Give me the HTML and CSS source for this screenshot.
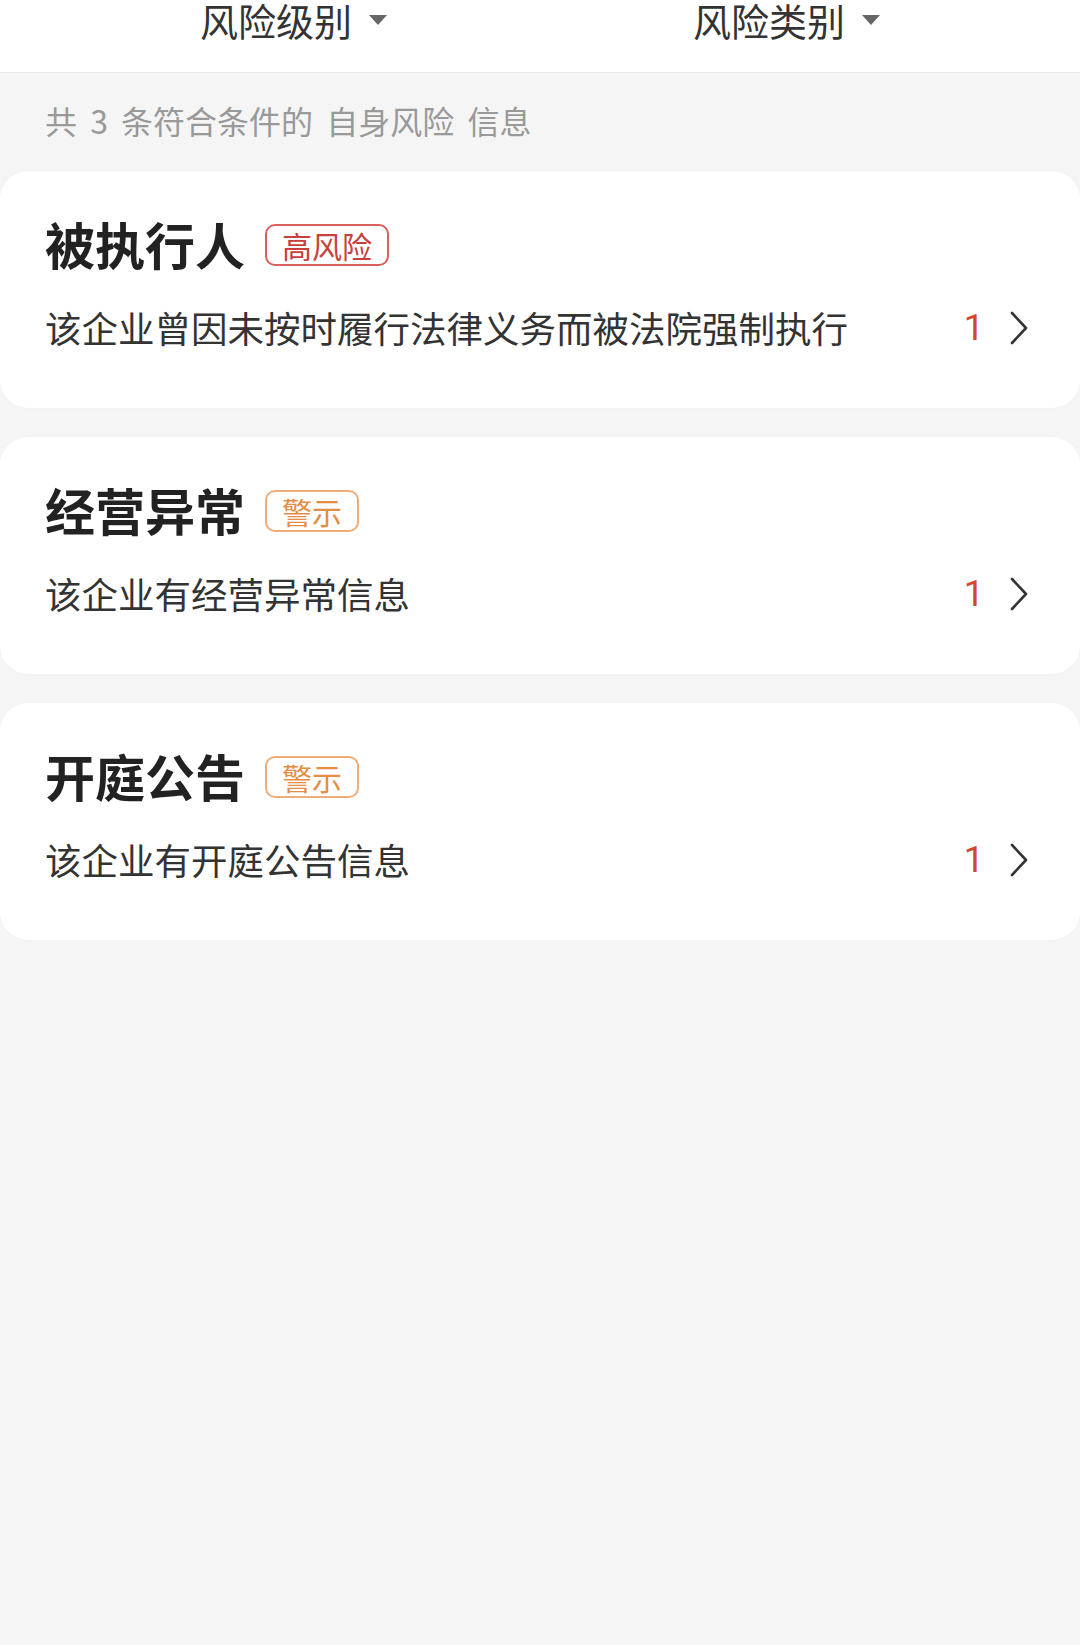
FILE: index.html
```html
<!DOCTYPE html>
<html lang="zh-CN">
<head>
  <meta charset="UTF-8">
  <meta name="viewport" content="width=device-width, initial-scale=1.0">
  <title>自身风险</title>
  <link rel="stylesheet" href="styles.css">
</head>
<body>
  <!-- 筛选栏 -->
  <div class="filter-bar">
    <div class="filter filter-level">
      <span>风险级别</span>
      <i class="caret"></i>
    </div>
    <div class="filter filter-type">
      <span>风险类别</span>
      <i class="caret"></i>
    </div>
  </div>

  <p class="summary">共 3 条符合条件的 自身风险 信息</p>

  <ul class="risk-list">
    <li class="risk-card">
      <div class="risk-head">
        <h3 class="risk-title">被执行人</h3>
        <span class="tag tag-high">高风险</span>
      </div>
      <div class="risk-row">
        <span class="risk-desc">该企业曾因未按时履行法律义务而被法院强制执行</span>
        <span class="risk-count">1</span>
        <svg class="chevron" width="18" height="34" viewBox="0 0 18 34"><path d="M2 2 L16 17 L2 32" fill="none" stroke="#333" stroke-width="2.6" stroke-linecap="round" stroke-linejoin="round"/></svg>
      </div>
    </li>
    <li class="risk-card">
      <div class="risk-head">
        <h3 class="risk-title">经营异常</h3>
        <span class="tag tag-warn">警示</span>
      </div>
      <div class="risk-row">
        <span class="risk-desc">该企业有经营异常信息</span>
        <span class="risk-count">1</span>
        <svg class="chevron" width="18" height="34" viewBox="0 0 18 34"><path d="M2 2 L16 17 L2 32" fill="none" stroke="#333" stroke-width="2.6" stroke-linecap="round" stroke-linejoin="round"/></svg>
      </div>
    </li>
    <li class="risk-card">
      <div class="risk-head">
        <h3 class="risk-title">开庭公告</h3>
        <span class="tag tag-warn">警示</span>
      </div>
      <div class="risk-row">
        <span class="risk-desc">该企业有开庭公告信息</span>
        <span class="risk-count">1</span>
        <svg class="chevron" width="18" height="34" viewBox="0 0 18 34"><path d="M2 2 L16 17 L2 32" fill="none" stroke="#333" stroke-width="2.6" stroke-linecap="round" stroke-linejoin="round"/></svg>
      </div>
    </li>
  </ul>
</body>
</html>
```

FILE: styles.css
```css
/* 基础 */
html, body {
  margin: 0;
  padding: 0;
}

body {
  background-color: #f5f5f5;
  font-family: "Noto Sans CJK SC", "Noto Sans", sans-serif;
  color: #333;
  min-height: 1645px;
}

ul {
  list-style: none;
  margin: 0;
  padding: 0;
}

/* 顶部筛选栏 */
.filter-bar {
  display: flex;
  height: 72px;
  background-color: #fff;
  border-bottom: 1px solid #ececec;
}

.filter {
  width: 50%;
  box-sizing: border-box;
  display: flex;
  align-items: flex-start;
  font-size: 38px;
  line-height: 40px;
  color: #333;
}

.filter-level {
  padding-left: 200px;
}

.filter-type {
  padding-left: 153px;
}

.caret {
  width: 0;
  height: 0;
  margin-left: 17px;
  margin-top: 15px;
  border-left: 9px solid transparent;
  border-right: 9px solid transparent;
  border-top: 10px solid #666;
}

/* 统计文字 */
.summary {
  margin: 0;
  padding: 27px 45px 31px;
  font-size: 32px;
  line-height: 40px;
  word-spacing: 6px;
  color: #999;
}

/* 风险卡片 */
.risk-list {
  display: flex;
  flex-direction: column;
  gap: 29px;
}

.risk-card {
  background-color: #fff;
  border-radius: 28px;
  padding: 44px 52px 56px 45px;
  box-shadow: 0 0 3px rgba(0, 0, 0, 0.03);
}

.risk-head {
  display: flex;
  align-items: center;
  gap: 20px;
  height: 56px;
}

.risk-title {
  margin: 0;
  font-size: 50px;
  line-height: 56px;
  font-weight: 700;
  color: #222;
}

.tag {
  font-size: 30px;
  line-height: 38px;
  padding: 0 15px;
  border-radius: 10px;
  border: 2px solid;
  margin-top: 4px;
}

.tag-high {
  color: #c8403d;
  border-color: #d9605d;
}

.tag-warn {
  color: #e58d45;
  border-color: #eeae7c;
}

.risk-row {
  display: flex;
  align-items: center;
  margin-top: 33px;
  height: 48px;
}

.risk-desc {
  flex: 1;
  font-size: 36.5px;
  line-height: 48px;
  color: #333;
}

.risk-count {
  font-family: "Roboto", "Noto Sans", sans-serif;
  font-size: 36px;
  line-height: 48px;
  color: #d5452f;
  margin-right: 26px;
}

.chevron {
  display: block;
}
```
